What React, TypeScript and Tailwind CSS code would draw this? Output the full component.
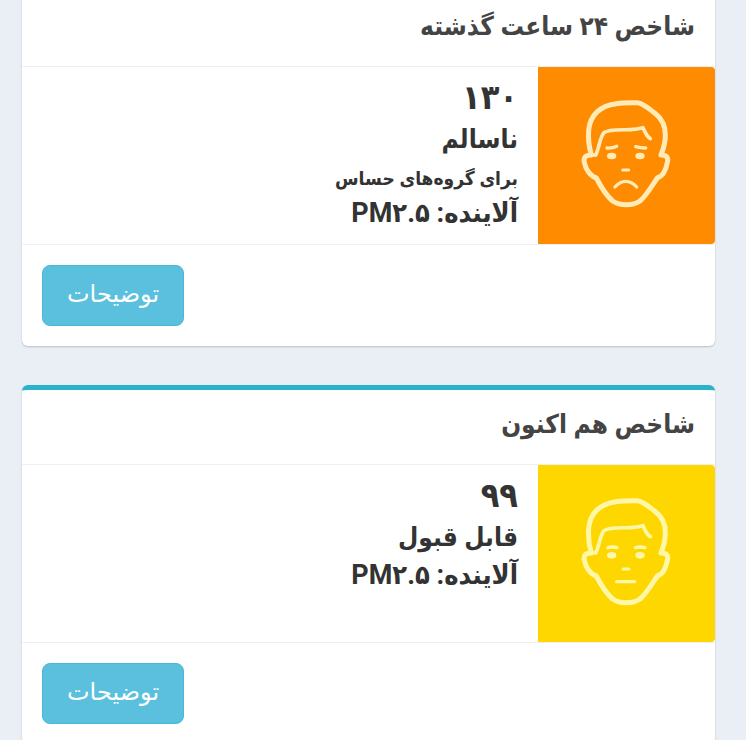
import React from 'react';

type Mood = 'sad' | 'neutral';

interface AirIndex {
  title: string;
  value: string;
  status: string;
  note?: string;
  pollutant: string;
  mood: Mood;
  tileClass: string;
  strokeClass: string;
}

const indexes: AirIndex[] = [
  {
    title: 'شاخص ۲۴ ساعت گذشته',
    value: '۱۳۰',
    status: 'ناسالم',
    note: 'برای گروه‌های حساس',
    pollutant: 'PM۲.۵',
    mood: 'sad',
    tileClass: 'bg-[#ff8c00]',
    strokeClass: 'text-[#ffebb8]',
  },
  {
    title: 'شاخص هم اکنون',
    value: '۹۹',
    status: 'قابل قبول',
    pollutant: 'PM۲.۵',
    mood: 'neutral',
    tileClass: 'bg-[#ffd700]',
    strokeClass: 'text-[#fff7a8]',
  },
];

const FaceIcon: React.FC<{ mood: Mood; className: string }> = ({ mood, className }) => (
  <svg
    viewBox="24 22 531 531"
    className={`w-full h-full ${className}`}
    fill="none"
    stroke="currentColor"
    strokeLinecap="round"
    strokeLinejoin="round"
    aria-hidden="true"
  >
    {/* Head and ears */}
    <path
      strokeWidth="15"
      d="M184 286 C177 262 174 238 176 212 C180 165 212 138 258 132 C282 128 304 129 322 129 C342 131 358 149 375 161 C397 178 407 200 406 228 C406 250 400 268 393 286 C410 286 416 294 412 308 C408 330 399 350 382 355 C366 378 350 407 330 424 C308 439 270 439 248 424 C228 407 212 380 199 355 C182 350 167 330 163 308 C160 294 166 286 184 286 Z"
    />
    {/* Hair line */}
    <path strokeWidth="11" d="M184 286 H197 C208 266 208 236 222 219 C236 207 278 211 302 210 C318 209 328 207 339 204 C344 215 349 230 361 237" />
    {mood === 'sad' ? (
      <>
        <path strokeWidth="10" d="M231 265 Q248 266 260 260 M317 261 Q330 265 347 265" />
        <path strokeWidth="9" d="M278 331 H296" />
        <path strokeWidth="10" d="M255 382 Q270 365 287 365 Q305 365 320 382" />
      </>
    ) : (
      <>
        <path strokeWidth="10" d="M234 270 Q246 266 261 270 M316 270 Q331 266 345 270" />
        <path strokeWidth="9" d="M279 334 H297" />
        <path strokeWidth="10" d="M260 372 H314" />
      </>
    )}
    {/* Eyes */}
    <g fill="currentColor" stroke="none">
      <ellipse cx="245" cy={mood === 'sad' ? 289 : 293} rx="14" ry="10" />
      <ellipse cx="330" cy={mood === 'sad' ? 289 : 293} rx="14" ry="10" />
    </g>
  </svg>
);

const IndexCard: React.FC<{ item: AirIndex }> = ({ item }) => (
  <section className="bg-white rounded-md border-t-[5px] border-[#2bb3cc] shadow-[0_1px_2px_rgba(0,0,0,0.2)]">
    <h2 className="px-5 pt-4 h-[74px] text-[26px] leading-9 font-bold text-[#444444]">{item.title}</h2>

    <div className="flex border-y border-[#f0f0f2]">
      <div className={`w-[177px] h-[177px] shrink-0 rounded-r-[4px] ${item.tileClass}`}>
        <FaceIcon mood={item.mood} className={item.strokeClass} />
      </div>
      <div className="flex-1 px-5 pt-3 font-bold text-[#333333]">
        <p className="text-[34px] leading-9">{item.value}</p>
        <p className="mt-1 text-[26px] leading-10">{item.status}</p>
        {item.note && <p className="pt-1 text-[19px] leading-8">{item.note}</p>}
        <p className="text-[27px] leading-9">آلاینده: {item.pollutant}</p>
      </div>
    </div>

    <div className="flex justify-end p-5">
      <button
        type="button"
        className="h-[61px] px-6 pb-1 rounded-lg border border-[#46b8da] bg-[#5bc0de] font-['DejaVu_Sans',sans-serif] text-[24px] leading-9 text-white"
      >
        توضیحات
      </button>
    </div>
  </section>
);

export default function App() {
  return (
    <div
      dir="rtl"
      className="min-h-screen overflow-hidden bg-[#eaeef5] font-[Roboto,'DejaVu_Sans_Condensed','DejaVu_Sans',sans-serif]"
    >
      <main className="-mt-[13px] mr-[31px] ml-[22px] flex flex-col gap-[39px]">
        {indexes.map((item) => (
          <IndexCard key={item.title} item={item} />
        ))}
      </main>
    </div>
  );
}
